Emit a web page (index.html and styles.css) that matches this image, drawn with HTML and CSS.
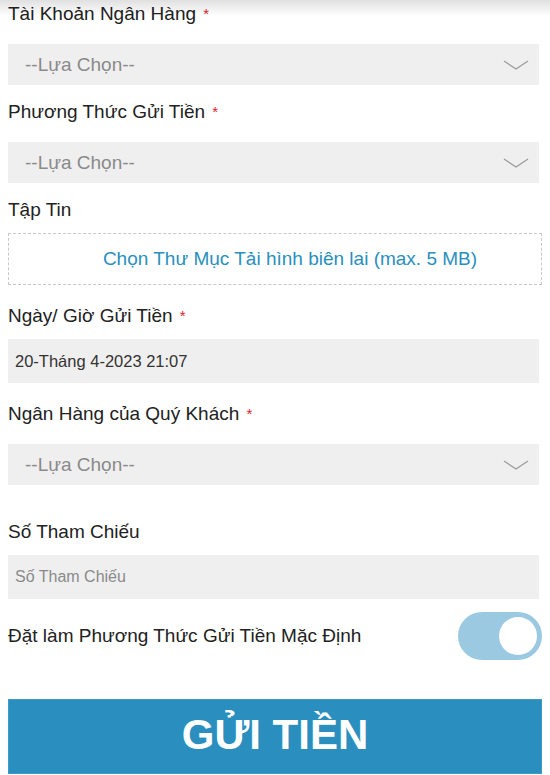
FILE: index.html
```html
<!DOCTYPE html>
<html lang="vi">
<head>
    <meta charset="UTF-8">
    <meta name="viewport" content="width=device-width, initial-scale=1.0">
    <title>Gửi Tiền</title>
    <link rel="stylesheet" href="styles.css">
</head>
<body>
    <div class="top-shadow"></div>

    <form class="deposit-form">
        <div class="field">
            <label class="field-label">Tài Khoản Ngân Hàng <span class="req">*</span></label>
            <div class="select-box">
                <span class="placeholder">--Lựa Chọn--</span>
                <svg class="chevron" width="26" height="10" viewBox="0 0 26 10"><polyline points="1,1 13,9 25,1" fill="none" stroke="#9a9a9a" stroke-width="1.2"/></svg>
            </div>
        </div>

        <div class="field">
            <label class="field-label">Phương Thức Gửi Tiền <span class="req">*</span></label>
            <div class="select-box">
                <span class="placeholder">--Lựa Chọn--</span>
                <svg class="chevron" width="26" height="10" viewBox="0 0 26 10"><polyline points="1,1 13,9 25,1" fill="none" stroke="#9a9a9a" stroke-width="1.2"/></svg>
            </div>
        </div>

        <div class="field field-file">
            <label class="field-label">Tập Tin</label>
            <div class="file-box">Chọn Thư Mục Tải hình biên lai (max. 5 MB)</div>
        </div>

        <div class="field field-wide">
            <label class="field-label">Ngày/ Giờ Gửi Tiền <span class="req">*</span></label>
            <div class="text-box date-value">20-Tháng 4-2023 21:07</div>
        </div>

        <div class="field field-last-select">
            <label class="field-label">Ngân Hàng của Quý Khách <span class="req">*</span></label>
            <div class="select-box">
                <span class="placeholder">--Lựa Chọn--</span>
                <svg class="chevron" width="26" height="10" viewBox="0 0 26 10"><polyline points="1,1 13,9 25,1" fill="none" stroke="#9a9a9a" stroke-width="1.2"/></svg>
            </div>
        </div>

        <div class="field field-ref">
            <label class="field-label">Số Tham Chiếu</label>
            <div class="text-box"><span class="placeholder small">Số Tham Chiếu</span></div>
        </div>

        <div class="toggle-row">
            <span class="toggle-label">Đặt làm Phương Thức Gửi Tiền Mặc Định</span>
            <span class="toggle"><span class="knob"></span></span>
        </div>

        <button type="button" class="submit-btn">GỬI TIỀN</button>
    </form>
</body>
</html>
```

FILE: styles.css
```css
body {
    margin: 0;
    padding: 0 8px;
    background: #fff;
    font-family: "Liberation Sans", Arial, sans-serif;
    color: #222;
    overflow: hidden;
}

.top-shadow {
    position: fixed;
    top: 0;
    left: 0;
    width: 100%;
    height: 16px;
    background: linear-gradient(to bottom, rgba(0, 0, 0, 0.12), rgba(0, 0, 0, 0));
    z-index: 10;
}

.deposit-form {
    padding-top: 3px;
}

.field {
    margin-bottom: 16px;
}

.field-file {
    margin-bottom: 20px;
}

.field-wide {
    margin-bottom: 20px;
}

.field-last-select {
    margin-bottom: 36px;
}

.field-ref {
    margin-bottom: 13px;
}

.field-label {
    display: block;
    font-size: 19px;
    line-height: 22px;
    color: #222;
    margin-bottom: 12px;
}

.req {
    color: #d8232f;
    font-size: 15px;
    vertical-align: top;
    margin-left: 2px;
}

.select-box {
    display: flex;
    align-items: center;
    justify-content: space-between;
    height: 41px;
    margin-top: 19px;
    margin-right: 3px;
    padding: 0 10px 0 17px;
    background-color: #efefef;
}

.placeholder {
    font-size: 19px;
    color: #8a8a8a;
}

.placeholder.small {
    font-size: 16px;
}

.file-box {
    height: 50px;
    border: 1px dashed #c8c8c8;
    display: flex;
    align-items: center;
    justify-content: center;
    padding-left: 30px;
    font-size: 19px;
    color: #2a8fbd;
}

.text-box {
    display: flex;
    align-items: center;
    height: 44px;
    margin-right: 3px;
    padding: 0 7px;
    background-color: #efefef;
}

.date-value {
    font-size: 16.5px;
    color: #333;
}

.toggle-row {
    display: flex;
    align-items: center;
    justify-content: space-between;
    height: 48px;
}

.toggle-label {
    font-size: 19px;
    color: #222;
}

.toggle {
    display: flex;
    align-items: center;
    justify-content: flex-end;
    width: 84px;
    height: 48px;
    padding: 0 5px;
    box-sizing: border-box;
    border-radius: 24px;
    background-color: #9cc9e2;
}

.knob {
    width: 38px;
    height: 38px;
    border-radius: 50%;
    background-color: #fff;
}

.submit-btn {
    display: block;
    width: 100%;
    height: 75px;
    margin-top: 39px;
    border: 1px solid #3c9cc6;
    background-color: #2a8fbe;
    color: #fff;
    font-family: "Liberation Sans", Arial, sans-serif;
    font-weight: bold;
    font-size: 42px;
    padding-bottom: 4px;
}
```
